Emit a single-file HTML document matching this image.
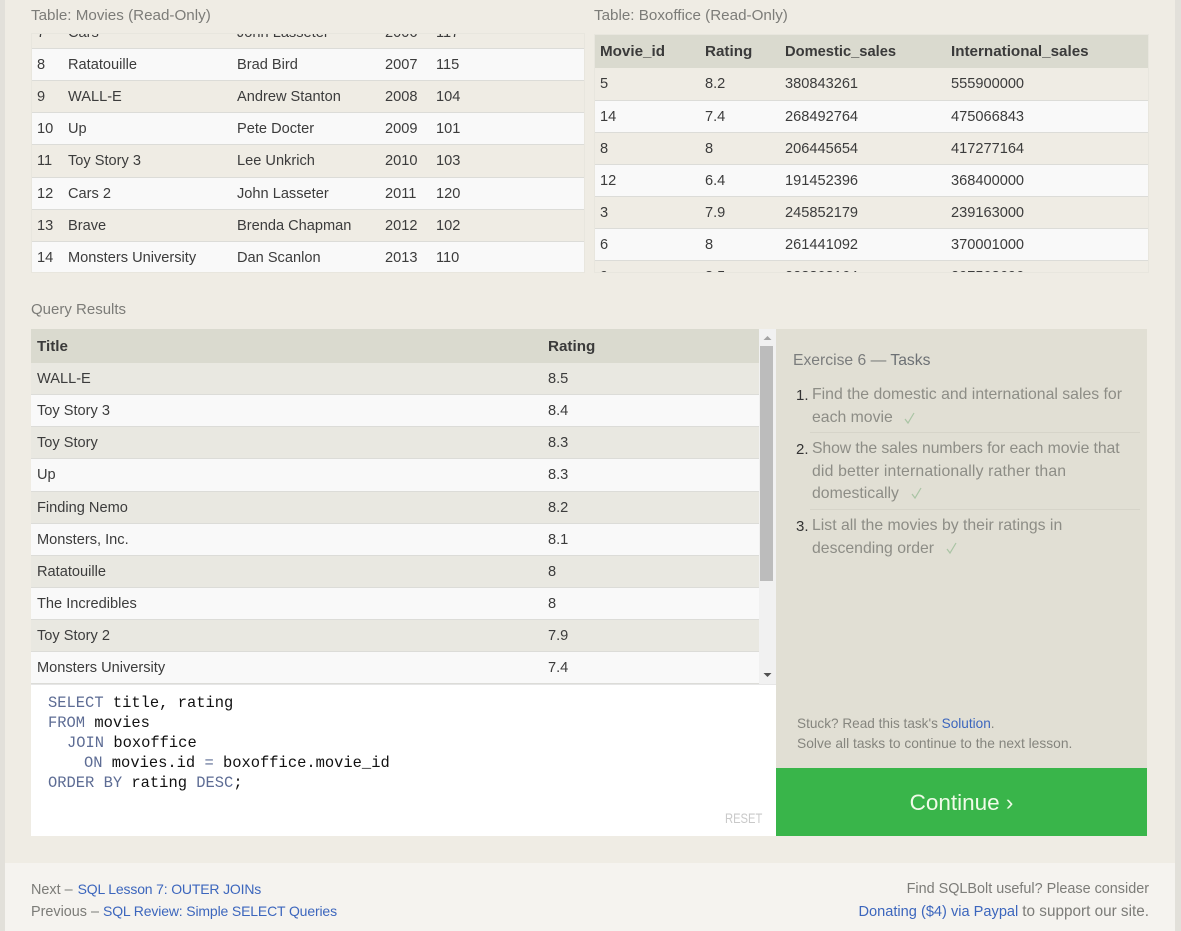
<!DOCTYPE html>
<html><head><meta charset="utf-8"><style>
html,body{margin:0;padding:0;width:1181px;height:931px;overflow:hidden;background:#e2e0da}
body{position:relative;font-family:"Liberation Sans",sans-serif;font-size:14.6px;color:#3c3c3c}
div,span,a{position:absolute;white-space:nowrap}
a{position:static;color:#3c66bd;text-decoration:none}
.bg{background:#efece4}
.r{height:31px;line-height:31px;border-bottom:1px solid #dcdcd8}
.r span,.h span{top:1px}
.a{background:#efece4}.b{background:#f9f9f9}.c{background:#e9e8e1}
.h{background:#dadacf;font-weight:bold;color:#3a3a3a;font-size:15.2px}
.l{color:#7c7c78;font-size:15.2px}
.f{color:#7c7c78;font-size:14.4px}
.m{font-family:"Liberation Mono",monospace;font-size:15.45px;color:#111;line-height:20px}
.m i{font-style:normal;color:#5d6c94}
.t{color:#8d8d86;font-size:15.8px}
.n{color:#333;font-size:15px}
</style></head><body>
<div class="bg" style="left:5px;top:0;width:1170px;height:863px"></div>
<div style="left:5px;top:863px;width:1170px;height:68px;background:#f5f3ef"></div>

<div class="l" style="left:31px;top:7px">Table: Movies (Read-Only)</div>
<div style="left:31px;top:33px;width:554px;height:240px;overflow:hidden">
<div class="r a" style="left:0;top:-16px;width:554px"><span style="left:6px">7</span><span style="left:37px">Cars</span><span style="left:206px">John Lasseter</span><span style="left:354px">2006</span><span style="left:405px">117</span></div>
<div class="r b" style="left:0;top:16px;width:554px"><span style="left:6px">8</span><span style="left:37px">Ratatouille</span><span style="left:206px">Brad Bird</span><span style="left:354px">2007</span><span style="left:405px">115</span></div>
<div class="r a" style="left:0;top:48px;width:554px"><span style="left:6px">9</span><span style="left:37px">WALL-E</span><span style="left:206px">Andrew Stanton</span><span style="left:354px">2008</span><span style="left:405px">104</span></div>
<div class="r b" style="left:0;top:80px;width:554px"><span style="left:6px">10</span><span style="left:37px">Up</span><span style="left:206px">Pete Docter</span><span style="left:354px">2009</span><span style="left:405px">101</span></div>
<div class="r a" style="left:0;top:112px;width:554px;height:32px;line-height:30px"><span style="left:6px">11</span><span style="left:37px">Toy Story 3</span><span style="left:206px">Lee Unkrich</span><span style="left:354px">2010</span><span style="left:405px">103</span></div>
<div class="r b" style="left:0;top:145px;width:554px"><span style="left:6px">12</span><span style="left:37px">Cars 2</span><span style="left:206px">John Lasseter</span><span style="left:354px">2011</span><span style="left:405px">120</span></div>
<div class="r a" style="left:0;top:177px;width:554px"><span style="left:6px">13</span><span style="left:37px">Brave</span><span style="left:206px">Brenda Chapman</span><span style="left:354px">2012</span><span style="left:405px">102</span></div>
<div class="r b" style="left:0;top:209px;width:554px"><span style="left:6px">14</span><span style="left:37px">Monsters University</span><span style="left:206px">Dan Scanlon</span><span style="left:354px">2013</span><span style="left:405px">110</span></div>
<div style="left:0;top:0;width:552px;height:238px;border:1px solid #e8e6de"></div>
</div>

<div class="l" style="left:594px;top:7px">Table: Boxoffice (Read-Only)</div>
<div style="left:594px;top:34px;width:555px;height:239px;overflow:hidden">
<div class="h" style="left:0;top:0;width:555px;height:34px;line-height:34px"><span style="left:6px">Movie_id</span><span style="left:111px">Rating</span><span style="left:191px;font-size:14.7px">Domestic_sales</span><span style="left:357px">International_sales</span></div>
<div class="r a" style="left:0;top:34px;width:555px;height:32px;line-height:30px"><span style="left:6px">5</span><span style="left:111px">8.2</span><span style="left:191px">380843261</span><span style="left:357px">555900000</span></div>
<div class="r b" style="left:0;top:67px;width:555px"><span style="left:6px">14</span><span style="left:111px">7.4</span><span style="left:191px">268492764</span><span style="left:357px">475066843</span></div>
<div class="r a" style="left:0;top:99px;width:555px"><span style="left:6px">8</span><span style="left:111px">8</span><span style="left:191px">206445654</span><span style="left:357px">417277164</span></div>
<div class="r b" style="left:0;top:131px;width:555px"><span style="left:6px">12</span><span style="left:111px">6.4</span><span style="left:191px">191452396</span><span style="left:357px">368400000</span></div>
<div class="r a" style="left:0;top:163px;width:555px"><span style="left:6px">3</span><span style="left:111px">7.9</span><span style="left:191px">245852179</span><span style="left:357px">239163000</span></div>
<div class="r b" style="left:0;top:195px;width:555px"><span style="left:6px">6</span><span style="left:111px">8</span><span style="left:191px">261441092</span><span style="left:357px">370001000</span></div>
<div class="r a" style="left:0;top:227px;width:555px"><span style="left:6px">9</span><span style="left:111px">8.5</span><span style="left:191px">223808164</span><span style="left:357px">297503696</span></div>
<div style="left:0;top:0;width:553px;height:237px;border:1px solid #e8e6de"></div>
</div>

<div class="l" style="left:31px;top:301px;font-size:15px">Query Results</div>
<div style="left:31px;top:329px;width:728px;height:355px;overflow:hidden">
<div class="h" style="left:0;top:0;width:728px;height:34px;line-height:34px"><span style="left:6px">Title</span><span style="left:517px">Rating</span></div>
<div class="r c" style="left:0;top:34px;width:728px"><span style="left:6px">WALL-E</span><span style="left:517px">8.5</span></div>
<div class="r b" style="left:0;top:66px;width:728px"><span style="left:6px">Toy Story 3</span><span style="left:517px">8.4</span></div>
<div class="r c" style="left:0;top:98px;width:728px"><span style="left:6px">Toy Story</span><span style="left:517px">8.3</span></div>
<div class="r b" style="left:0;top:130px;width:728px;height:32px;line-height:30px"><span style="left:6px">Up</span><span style="left:517px">8.3</span></div>
<div class="r c" style="left:0;top:163px;width:728px"><span style="left:6px">Finding Nemo</span><span style="left:517px">8.2</span></div>
<div class="r b" style="left:0;top:195px;width:728px"><span style="left:6px">Monsters, Inc.</span><span style="left:517px">8.1</span></div>
<div class="r c" style="left:0;top:227px;width:728px"><span style="left:6px">Ratatouille</span><span style="left:517px">8</span></div>
<div class="r b" style="left:0;top:259px;width:728px"><span style="left:6px">The Incredibles</span><span style="left:517px">8</span></div>
<div class="r c" style="left:0;top:291px;width:728px"><span style="left:6px">Toy Story 2</span><span style="left:517px">7.9</span></div>
<div class="r b" style="left:0;top:323px;width:728px"><span style="left:6px">Monsters University</span><span style="left:517px">7.4</span></div>
</div>
<div style="left:759px;top:329px;width:17px;height:355px;background:#f1f1f1"></div>
<div style="left:760px;top:346px;width:13px;height:235px;background:#bcbcbc"></div>
<svg style="position:absolute;left:759px;top:329px" width="17" height="355"><path d="M4.5 11L8.5 7L12.5 11Z" fill="#a3a3a3"/><path d="M4.5 344L8.5 348L12.5 344Z" fill="#505050"/></svg>

<div style="left:31px;top:684px;width:745px;height:152px;background:#fff;border-top:1px solid #e6e6e6;box-sizing:border-box"></div>
<div class="m" style="left:48px;top:693px"><i>SELECT</i> title, rating</div>
<div class="m" style="left:48px;top:713px"><i>FROM</i> movies</div>
<div class="m" style="left:67px;top:733px"><i>JOIN</i> boxoffice</div>
<div class="m" style="left:84px;top:753px"><i>ON</i> movies.id <i>=</i> boxoffice.movie_id</div>
<div class="m" style="left:48px;top:773px"><i>ORDER BY</i> rating <i>DESC</i>;</div>
<div style="left:725px;top:810px;font-size:14px;color:#c9c9c9;transform:scaleX(.8);transform-origin:0 0">RESET</div>

<div style="left:776px;top:329px;width:371px;height:439px;background:#e1dfd4"></div>
<div style="left:793px;top:352px;font-size:15.7px;color:#7b7d7d">Exercise 6 — <span style="position:static;color:#6c7074">Tasks</span></div>
<div class="n" style="left:796px;top:387px">1.</div>
<div class="t" style="left:812px;top:386px">Find the domestic and international sales for</div>
<div class="t" style="left:812px;top:409px">each movie</div>
<div style="left:810px;top:432px;width:330px;height:1px;background:#d6d4c9"></div>
<div class="n" style="left:796px;top:441px">2.</div>
<div class="t" style="left:812px;top:440px;letter-spacing:-.1px">Show the sales numbers for each movie that</div>
<div class="t" style="left:812px;top:463px;letter-spacing:.15px">did better internationally rather than</div>
<div class="t" style="left:812px;top:485px">domestically</div>
<div style="left:810px;top:509px;width:330px;height:1px;background:#d6d4c9"></div>
<div class="n" style="left:796px;top:518px">3.</div>
<div class="t" style="left:812px;top:517px">List all the movies by their ratings in</div>
<div class="t" style="left:812px;top:540px">descending order</div>
<svg style="position:absolute;left:776px;top:329px" width="371" height="300" fill="none" stroke="#a9c4a4" stroke-width="1.2"><path d="M129 90L132 94L138 84"/><path d="M136 165L139 169L145 159"/><path d="M171 220L174 224L180 214"/></svg>
<div style="left:797px;top:716px;font-size:13.6px;color:#85857e">Stuck? Read this task's <a href="#">Solution</a>.</div>
<div style="left:797px;top:736px;font-size:13.8px;color:#85857e">Solve all tasks to continue to the next lesson.</div>
<div style="left:776px;top:768px;width:371px;height:68px;background:#39b54a;color:#f0fbe8;font-size:22.5px;line-height:70px;text-align:center">Continue ›</div>

<div class="f" style="left:31px;top:881px">Next – <a href="#" style="font-size:14px;letter-spacing:-.17px;margin-left:1px">SQL Lesson 7: OUTER JOINs</a></div>
<div class="f" style="left:31px;top:903px">Previous – <a href="#" style="font-size:14px;letter-spacing:-.15px">SQL Review: Simple SELECT Queries</a></div>
<div class="f" style="right:32px;top:881px">Find SQLBolt useful? Please consider</div>
<div class="f" style="right:32px;top:903px"><a href="#" style="font-size:14.6px">Donating ($4) via Paypal</a> <span style="position:static;font-size:15.3px">to support our site.</span></div>
</body></html>
